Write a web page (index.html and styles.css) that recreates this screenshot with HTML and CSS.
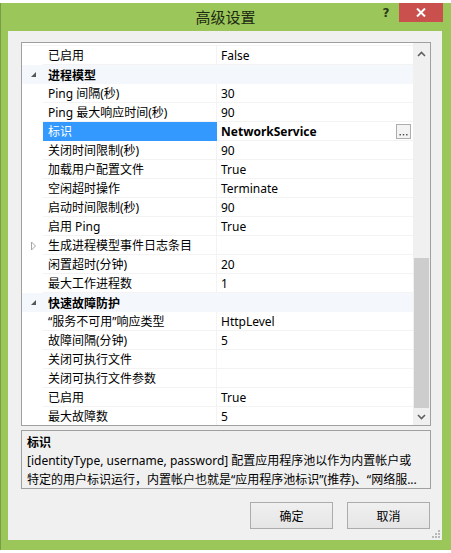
FILE: index.html
```html
<!DOCTYPE html>
<html lang="zh-CN">
<head>
<meta charset="utf-8">
<title>高级设置</title>
<link rel="stylesheet" href="styles.css">
</head>
<body>
<div class="window">
  <div class="titlebar">
    <div></div>
    <div class="title">高级设置</div>
    <div class="caption-btns">
      <div class="help">?</div>
      <div class="close">
        <svg width="10" height="9" viewBox="0 0 10 9"><path d="M1 0.5 L9 8.5 M9 0.5 L1 8.5" stroke="#fff" stroke-width="2" fill="none"/></svg>
      </div>
    </div>
  </div>
  <div class="client">
    <div class="grid">
      <div class="rows">
        <div class="spacer"></div>
        <div class="row"><div class="gutter"></div><div class="label">已启用</div><div class="value">False</div></div>
        <div class="row category"><div class="gutter"><svg width="7" height="7" viewBox="0 0 7 7"><polygon points="6,1 6,6 1,6" fill="#575757"/></svg></div><div class="label">进程模型</div></div>
        <div class="row"><div class="gutter"></div><div class="label">Ping 间隔(秒)</div><div class="value">30</div></div>
        <div class="row"><div class="gutter"></div><div class="label">Ping 最大响应时间(秒)</div><div class="value">90</div></div>
        <div class="row selected"><div class="gutter"></div><div class="label">标识</div><div class="value"><b>NetworkService</b><span class="ellipsis-btn"><svg width="9" height="3" viewBox="0 0 9 3" fill="#444"><rect x="0.5" y="1" width="1.4" height="1.4"/><rect x="3.8" y="1" width="1.4" height="1.4"/><rect x="7.1" y="1" width="1.4" height="1.4"/></svg></span></div></div>
        <div class="row"><div class="gutter"></div><div class="label">关闭时间限制(秒)</div><div class="value">90</div></div>
        <div class="row"><div class="gutter"></div><div class="label">加载用户配置文件</div><div class="value">True</div></div>
        <div class="row"><div class="gutter"></div><div class="label">空闲超时操作</div><div class="value">Terminate</div></div>
        <div class="row"><div class="gutter"></div><div class="label">启动时间限制(秒)</div><div class="value">90</div></div>
        <div class="row"><div class="gutter"></div><div class="label">启用 Ping</div><div class="value">True</div></div>
        <div class="row"><div class="gutter"><svg width="7" height="10" viewBox="0 0 7 10"><polygon points="1.5,1 5.5,5 1.5,9" fill="none" stroke="#a6a6a6" stroke-width="1"/></svg></div><div class="label">生成进程模型事件日志条目</div><div class="value"></div></div>
        <div class="row"><div class="gutter"></div><div class="label">闲置超时(分钟)</div><div class="value">20</div></div>
        <div class="row"><div class="gutter"></div><div class="label">最大工作进程数</div><div class="value">1</div></div>
        <div class="row category"><div class="gutter"><svg width="7" height="7" viewBox="0 0 7 7"><polygon points="6,1 6,6 1,6" fill="#575757"/></svg></div><div class="label">快速故障防护</div></div>
        <div class="row"><div class="gutter"></div><div class="label">“服务不可用”响应类型</div><div class="value">HttpLevel</div></div>
        <div class="row"><div class="gutter"></div><div class="label">故障间隔(分钟)</div><div class="value">5</div></div>
        <div class="row"><div class="gutter"></div><div class="label">关闭可执行文件</div><div class="value"></div></div>
        <div class="row"><div class="gutter"></div><div class="label">关闭可执行文件参数</div><div class="value"></div></div>
        <div class="row"><div class="gutter"></div><div class="label">已启用</div><div class="value">True</div></div>
        <div class="row"><div class="gutter"></div><div class="label">最大故障数</div><div class="value">5</div></div>
      </div>
      <div class="scrollbar">
        <div class="sb-btn up"><svg width="9" height="6" viewBox="0 0 9 6"><path d="M1 5 L4.5 1.5 L8 5" stroke="#606060" stroke-width="1.6" fill="none"/></svg></div>
        <div class="sb-track"><div class="sb-thumb"></div></div>
        <div class="sb-btn down"><svg width="9" height="6" viewBox="0 0 9 6"><path d="M1 1 L4.5 4.5 L8 1" stroke="#606060" stroke-width="1.6" fill="none"/></svg></div>
      </div>
    </div>
    <div class="desc">
      <div class="desc-title">标识</div>
      <div class="desc-line">[identityType, username, password] 配置应用程序池以作为内置帐户或</div>
      <div class="desc-line">特定的用户标识运行，内置帐户也就是“应用程序池标识”(推荐)、“网络服...</div>
    </div>
    <div class="buttons">
      <div class="btn">确定</div>
      <div class="btn">取消</div>
    </div>
    <div class="grip">
      <svg width="8" height="8" viewBox="0 0 8 8" fill="#b8b8b8"><rect x="6" y="0" width="2" height="2"/><rect x="3" y="3" width="2" height="2"/><rect x="6" y="3" width="2" height="2"/><rect x="0" y="6" width="2" height="2"/><rect x="3" y="6" width="2" height="2"/><rect x="6" y="6" width="2" height="2"/></svg>
    </div>
  </div>
</div>
</body>
</html>
```
FILE: styles.css
```css
html, body {
  margin: 0;
  padding: 0;
  background: #ffffff;
}

body {
  font-family: "Noto Sans", "Noto Sans CJK SC", sans-serif;
  font-size: 12px;
  color: #000;
}

.window {
  margin-top: 3px;
  width: 451px;
  height: 547px;
  box-sizing: border-box;
  background: #9bc659;
  border-left: 1px solid #7a9c48;
  padding: 0 9px 10px 7px;
  display: flex;
  flex-direction: column;
}

.titlebar {
  height: 28px;
  flex: none;
  display: grid;
  grid-template-columns: 1fr auto 1fr;
  align-items: start;
}

.title {
  font-family: "Noto Sans CJK SC", sans-serif;
  font-size: 15px;
  line-height: 28px;
  color: #1e2a14;
  padding-left: 1px;
}

.caption-btns {
  justify-self: end;
  display: flex;
  align-items: flex-start;
  margin-right: -1px;
}

.help {
  width: 14px;
  margin-right: 6px;
  font-family: "DejaVu Sans", sans-serif;
  font-weight: bold;
  font-size: 12px;
  line-height: 20px;
  text-align: center;
  color: #2a3a1c;
}

.close {
  width: 44px;
  height: 19px;
  background: #c9504c;
  display: flex;
  align-items: center;
  justify-content: center;
}

.client {
  flex: 1;
  position: relative;
  background: #f0f0f0;
  padding: 11px 11px 0 13px;
  display: flex;
  flex-direction: column;
}

.grid {
  height: 384px;
  box-sizing: border-box;
  border: 1px solid #a0a0a0;
  background: #fff;
  display: flex;
  overflow: hidden;
}

.rows {
  flex: 1;
  overflow: hidden;
}

.spacer {
  height: 3px;
  box-shadow: inset 0 -1px 0 #f3f3f3;
}

.row {
  display: flex;
  height: 19px;
  line-height: 19px;
  white-space: nowrap;
}

.gutter {
  width: 21px;
  flex: none;
  display: flex;
  align-items: center;
  justify-content: center;
  padding-left: 1px;
  box-sizing: border-box;
}

.label {
  width: 174px;
  flex: none;
  padding-left: 5px;
  box-sizing: border-box;
  box-shadow: inset -1px -1px 0 #f3f3f3;
}

.value {
  flex: 1;
  padding-left: 4px;
  padding-right: 2px;
  display: flex;
  align-items: center;
  justify-content: space-between;
  box-shadow: inset 0 -1px 0 #f3f3f3;
}

.category {
  background: #f4f7fb;
}

.category .label {
  font-weight: bold;
  font-family: "Noto Sans CJK SC", sans-serif;
  box-shadow: none;
  width: auto;
}

.selected .label {
  background: #3399ff;
  color: #fff;
  box-shadow: none;
}

.value b {
  font-weight: bold;
}

.ellipsis-btn {
  width: 13px;
  height: 13px;
  border: 1px solid #adadad;
  background: #f3f3f3;
  display: flex;
  align-items: flex-end;
  justify-content: center;
  padding-bottom: 2px;
  box-sizing: content-box;
  height: 11px;
}

.scrollbar {
  width: 17px;
  flex: none;
  background: #f0f0f0;
  display: flex;
  flex-direction: column;
}

.sb-btn {
  display: flex;
  align-items: center;
  justify-content: center;
}

.sb-btn.up {
  height: 22px;
}

.sb-btn.down {
  height: 17px;
}

.sb-track {
  flex: 1;
  display: flex;
  flex-direction: column;
  justify-content: flex-end;
}

.sb-thumb {
  height: 150px;
  margin: 0 1px;
  background: #cdcdcd;
}

.desc {
  margin-top: 4px;
  height: 59px;
  box-sizing: border-box;
  border: 1px solid #a0a0a0;
  padding: 1px 5px 0 5px;
  line-height: 19px;
  overflow: hidden;
}

.desc-title {
  font-weight: bold;
  font-family: "Noto Sans CJK SC", sans-serif;
}

.desc-line {
  white-space: nowrap;
  overflow: hidden;
}

.buttons {
  margin-top: 13px;
  margin-right: 1px;
  display: flex;
  justify-content: flex-end;
  gap: 14px;
}

.btn {
  width: 83px;
  height: 27px;
  box-sizing: border-box;
  border: 1px solid #acacac;
  background: linear-gradient(#f0f0f0, #e5e5e5);
  display: flex;
  align-items: center;
  justify-content: center;
  font-family: "Noto Sans CJK SC", sans-serif;
}

.grip {
  position: absolute;
  right: 2px;
  bottom: 2px;
  width: 8px;
  height: 8px;
  line-height: 0;
}
```
